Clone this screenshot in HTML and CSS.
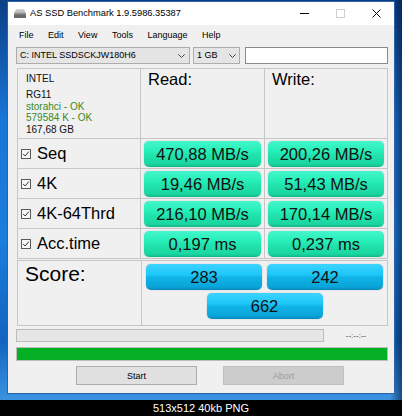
FILE: index.html
```html
<!DOCTYPE html>
<html>
<head>
<meta charset="utf-8">
<link rel="stylesheet" href="styles.css">
</head>
<body>
<div class="desktop">
  <div class="window">
    <div class="titlebar">
      <svg class="appicon" width="12" height="9" viewBox="0 0 12 9">
        <defs>
          <linearGradient id="dt" x1="0" y1="0" x2="0" y2="1">
            <stop offset="0" stop-color="#d8d8d8"/>
            <stop offset="1" stop-color="#a8a8a8"/>
          </linearGradient>
        </defs>
        <path d="M2 0 H10 L12 4.5 H0 Z" fill="url(#dt)"/>
        <rect x="0" y="4.5" width="12" height="4.5" fill="#6a6a6a"/>
        <rect x="0" y="4.5" width="12" height="1" fill="#8c8c8c"/>
      </svg>
      <span class="title">AS SSD Benchmark 1.9.5986.35387</span>
      <div class="controls">
        <div class="ctl"><svg width="9" height="9" viewBox="0 0 9 9"><path d="M0 4.5 H9" stroke="#000" stroke-width="1"/></svg></div>
        <div class="ctl"><svg width="9" height="9" viewBox="0 0 9 9"><rect x="0.5" y="0.5" width="8" height="8" fill="none" stroke="#cfcfcf"/></svg></div>
        <div class="ctl"><svg width="9" height="9" viewBox="0 0 9 9"><path d="M0.5 0.5 L8.5 8.5 M8.5 0.5 L0.5 8.5" stroke="#111" stroke-width="1"/></svg></div>
      </div>
    </div>
    <div class="menubar">
      <span>File</span><span>Edit</span><span>View</span><span>Tools</span><span>Language</span><span>Help</span>
    </div>
    <div class="content">
      <div class="toolbar">
        <div class="combo drive"><span>C: INTEL SSDSCKJW180H6</span><svg class="chev" width="7" height="4" viewBox="0 0 7 4"><path d="M0.3 0.3 L3.5 3.5 L6.7 0.3" fill="none" stroke="#444"/></svg></div>
        <div class="combo size"><span>1 GB</span><svg class="chev" width="7" height="4" viewBox="0 0 7 4"><path d="M0.3 0.3 L3.5 3.5 L6.7 0.3" fill="none" stroke="#444"/></svg></div>
        <div class="textbox"></div>
      </div>
      <div class="results">
        <div class="cell info">
          <div class="brand">INTEL</div>
          <div>RG11</div>
          <div class="ok">storahci - OK</div>
          <div class="ok">579584 K - OK</div>
          <div>167,68 GB</div>
        </div>
        <div class="cell head">Read:</div>
        <div class="cell head">Write:</div>

        <div class="cell label"><svg class="chk" width="10" height="10" viewBox="0 0 10 10"><rect x="0.5" y="0.5" width="9" height="9" fill="#f7f7f7" stroke="#5a5a5a"/><path d="M2.2 5 L4.2 7 L7.8 2.6" fill="none" stroke="#333" stroke-width="1"/></svg><span>Seq</span></div>
        <div class="cell val"><div class="gbox">470,88 MB/s</div></div>
        <div class="cell val"><div class="gbox">200,26 MB/s</div></div>

        <div class="cell label"><svg class="chk" width="10" height="10" viewBox="0 0 10 10"><rect x="0.5" y="0.5" width="9" height="9" fill="#f7f7f7" stroke="#5a5a5a"/><path d="M2.2 5 L4.2 7 L7.8 2.6" fill="none" stroke="#333" stroke-width="1"/></svg><span>4K</span></div>
        <div class="cell val"><div class="gbox">19,46 MB/s</div></div>
        <div class="cell val"><div class="gbox">51,43 MB/s</div></div>

        <div class="cell label"><svg class="chk" width="10" height="10" viewBox="0 0 10 10"><rect x="0.5" y="0.5" width="9" height="9" fill="#f7f7f7" stroke="#5a5a5a"/><path d="M2.2 5 L4.2 7 L7.8 2.6" fill="none" stroke="#333" stroke-width="1"/></svg><span>4K-64Thrd</span></div>
        <div class="cell val"><div class="gbox">216,10 MB/s</div></div>
        <div class="cell val"><div class="gbox">170,14 MB/s</div></div>

        <div class="cell label"><svg class="chk" width="10" height="10" viewBox="0 0 10 10"><rect x="0.5" y="0.5" width="9" height="9" fill="#f7f7f7" stroke="#5a5a5a"/><path d="M2.2 5 L4.2 7 L7.8 2.6" fill="none" stroke="#333" stroke-width="1"/></svg><span>Acc.time</span></div>
        <div class="cell val"><div class="gbox">0,197 ms</div></div>
        <div class="cell val"><div class="gbox">0,237 ms</div></div>
      </div>
      <div class="score">
        <div class="cell score-label">Score:</div>
        <div class="cell score-vals">
          <div class="bbox">283</div>
          <div class="bbox">242</div>
          <div class="bbox">662</div>
        </div>
      </div>
      <div class="progress-row">
        <div class="pbar"></div>
        <span class="time">--:--:--</span>
      </div>
      <div class="greenbar"></div>
      <div class="buttons">
        <div class="btn">Start</div>
        <div class="btn disabled">Abort</div>
      </div>
    </div>
  </div>
</div>
<div class="caption">513x512 40kb PNG</div>
</body>
</html>
```
FILE: styles.css
```css
html, body {
  margin: 0;
  padding: 0;
}
body {
  width: 402px;
  height: 416px;
  overflow: hidden;
  background: #000;
  font-family: "Liberation Sans", Arial, sans-serif;
  color: #000;
}
.desktop {
  box-sizing: border-box;
  height: 400px;
  padding: 1px 7px 0 7px;
  background:
    linear-gradient(90deg, rgba(0,0,0,0) 0%, rgba(0,0,0,0) 97%, rgba(5,25,60,0.6) 100%),
    linear-gradient(180deg, #0b3f86 0%, #1a76d6 30%, #1c7ddc 60%, #1264bf 85%, #3b93e0 100%);
}
.window {
  box-sizing: border-box;
  width: 388px;
  height: 393px;
  border: 1px solid #2c62a8;
  background: #f0f0f0;
  display: flex;
  flex-direction: column;
}
.titlebar {
  height: 23px;
  background: #fff;
  display: flex;
  align-items: center;
  flex: none;
}
.appicon {
  margin-left: 6px;
  flex: none;
}
.title {
  margin-left: 4px;
  font-size: 9.3px;
  line-height: 23px;
  color: #000;
}
.controls {
  margin-left: auto;
  display: flex;
}
.ctl {
  width: 36px;
  height: 23px;
  display: flex;
  align-items: center;
  justify-content: center;
}
.menubar {
  height: 20px;
  flex: none;
  display: flex;
  gap: 14.5px;
  padding-left: 11px;
  font-size: 9px;
  line-height: 20px;
}
.content {
  padding: 2px 6px 0 8px;
  flex: 1;
}
.toolbar {
  display: flex;
  height: 17px;
}
.combo {
  box-sizing: border-box;
  height: 17px;
  border: 1px solid #adadad;
  background: #e5e5e5;
  display: flex;
  align-items: center;
  padding-left: 3px;
  font-size: 9px;
  line-height: 15px;
}
.combo .chev {
  margin-left: auto;
}
.drive {
  width: 174px;
  padding-right: 4px;
}
.size {
  width: 47px;
  margin-left: 3px;
  padding-right: 3px;
}
.textbox {
  box-sizing: border-box;
  width: 143px;
  height: 17px;
  margin-left: 5px;
  border: 1px solid #8a8a8a;
  background: #fff;
}
.results {
  margin: 4px 0 0 1px;
  display: grid;
  grid-template-columns: 122px 123px 122px;
  grid-template-rows: 69px 29px 29px 29px 29px;
  gap: 1px;
  width: max-content;
  background: #c6c6c6;
  border: 1px solid #c6c6c6;
}
.cell {
  background: #f0f0f0;
  box-sizing: border-box;
}
.info {
  padding: 4px 0 0 8px;
  font-size: 10px;
  line-height: 11.7px;
  color: #111;
}
.info .brand {
  margin-bottom: 4.3px;
}
.info .ok {
  color: #3a8a22;
}
.head {
  padding: 1px 0 0 7px;
  font-size: 16.5px;
}
.label {
  display: flex;
  align-items: center;
  padding-left: 3px;
  gap: 6px;
  font-size: 16.5px;
}
.chk {
  flex: none;
}
.val {
  padding: 2px 3px 1px 3px;
}
.gbox {
  height: 26px;
  border-radius: 5px;
  display: flex;
  align-items: center;
  justify-content: center;
  font-size: 16.5px;
  color: #111;
  background: linear-gradient(180deg, #44f6cc 0%, #26eeb7 40%, #22e4ae 52%, #1bd6a1 88%, #12b889 100%);
  box-shadow: 0 0 1px rgba(0, 90, 60, 0.45);
}
.score {
  box-sizing: border-box;
  height: 66px;
  margin: 1px 0 0 1px;
  display: grid;
  grid-template-columns: 123px 245px;
  gap: 1px;
  width: max-content;
  background: #c6c6c6;
  border: 1px solid #c6c6c6;
}
.score-label {
  padding: 1px 0 0 7px;
  font-size: 21px;
}
.score-vals {
  display: flex;
  flex-wrap: wrap;
  justify-content: center;
  align-content: flex-start;
  padding-top: 3px;
  column-gap: 5px;
  row-gap: 3px;
}
.bbox {
  width: 116px;
  height: 26px;
  border-radius: 5px;
  display: flex;
  align-items: center;
  justify-content: center;
  font-size: 16.5px;
  color: #111;
  background: linear-gradient(180deg, #3dd4ff 0%, #1cc6f7 42%, #10b3e6 52%, #0aa4d8 88%, #0888bb 100%);
  box-shadow: 0 0 1px rgba(0, 60, 100, 0.5);
}
.progress-row {
  margin-top: 3px;
  display: flex;
  align-items: center;
  height: 13px;
}
.pbar {
  box-sizing: border-box;
  width: 308px;
  height: 13px;
  border: 1px solid #bcbcbc;
  background: #e6e6e6;
}
.time {
  flex: 1;
  text-align: center;
  font-size: 8px;
  color: #444;
}
.greenbar {
  box-sizing: border-box;
  margin-top: 5px;
  width: 372px;
  height: 14px;
  border: 1px solid #bcbcbc;
  background: #06b025;
}
.buttons {
  margin-top: 5px;
  display: flex;
  padding-left: 60px;
  gap: 26px;
}
.btn {
  box-sizing: border-box;
  width: 121px;
  height: 19px;
  border: 1px solid #adadad;
  background: #e1e1e1;
  display: flex;
  align-items: center;
  justify-content: center;
  font-size: 9px;
  color: #000;
}
.btn.disabled {
  border-color: #bfbfbf;
  background: #cccccc;
  color: #9d9d9d;
}
.caption {
  height: 16px;
  background: #000;
  color: #fff;
  font-size: 11px;
  line-height: 16px;
  text-align: center;
}
```
